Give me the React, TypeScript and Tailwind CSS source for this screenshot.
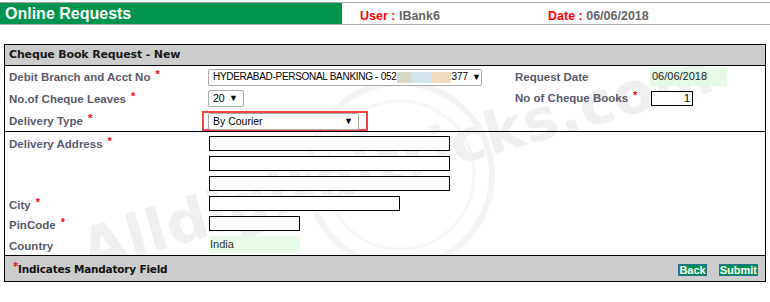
import React from "react";

const Star = () => (
  <span className="text-[#ff0000] text-[11px] relative -top-[3px] ml-[5px] font-bold">*</span>
);

const Label = ({ children, star = false }: { children: React.ReactNode; star?: boolean }) => (
  <div className="text-[11.5px] font-bold text-[#5a5a6c] whitespace-nowrap leading-none">
    {children}
    {star && <Star />}
  </div>
);

const SelectBox = ({ children, w }: { children: React.ReactNode; w: string }) => (
  <div
    className={`${w} h-[17px] border border-[#a9a9a9] rounded-[2px] bg-white flex items-center justify-between pl-[4px] pr-[5px] text-[10.5px] text-black leading-none whitespace-nowrap overflow-hidden`}
  >
    {children}
    <span className="text-[9px] ml-[4px] shrink-0">▼</span>
  </div>
);

const TextBox = ({ w, value = "", right = false }: { w: string; value?: string; right?: boolean }) => (
  <div
    className={`${w} h-[15px] border border-black bg-white text-[11px] leading-[13px] px-[2px] text-black ${
      right ? "text-right" : ""
    }`}
  >
    {value}
  </div>
);

const verdana = { fontFamily: "'DejaVu Sans', Verdana, sans-serif" };

export default function App() {
  return (
    <div
      className="relative w-[770px] h-[302px] bg-white overflow-hidden"
      style={{ fontFamily: "'Liberation Sans', Arial, sans-serif" }}
    >
      {/* Watermark */}
      <div className="absolute inset-0 pointer-events-none overflow-hidden">
        <svg className="absolute left-[300px] top-[75px]" width="200" height="200" viewBox="0 0 200 200">
          <circle cx="100" cy="100" r="92" fill="none" stroke="#f4f4f4" strokeWidth="6" />
          <circle cx="100" cy="100" r="74" fill="none" stroke="#f6f6f6" strokeWidth="3" />
        </svg>
        <div
          className="absolute left-[70px] top-[118px] text-[58px] font-bold text-[#f0f0f0] whitespace-nowrap -rotate-[16deg] origin-center tracking-[1px]"
          style={verdana}
        >
          Alldigitaltricks.com
        </div>
      </div>

      {/* Top header */}
      <div className="relative mt-[2px] h-[23px] border-y border-[#a8a8a8] flex bg-white">
        <div className="w-[342px] bg-[#00944f] text-white font-bold text-[16px] leading-[21px] pl-[5px]">
          Online Requests
        </div>
        <div className="flex items-center pt-[6px] text-[12.5px] font-bold">
          <div className="ml-[18px] w-[188px]">
            <span className="text-[#ff0000]">User : </span>
            <span className="text-[#666666]">IBank6</span>
          </div>
          <div>
            <span className="text-[#ff0000]">Date : </span>
            <span className="text-[#666666]">06/06/2018</span>
          </div>
        </div>
      </div>

      {/* Panel */}
      <div className="relative mx-[4px] mt-[19px] border border-black">
        <div
          className="h-[21px] bg-[#cccccc] border-b border-black flex items-center pl-[4px] text-[11px] tracking-[-0.15px] font-bold text-[#1a1a1a]"
          style={verdana}
        >
          Cheque Book Request - New
        </div>

        {/* Section 1 */}
        <div className="border-b border-black">
          <div className="h-[22px] flex items-center">
            <div className="w-[203px] pl-[4px] pt-[2px]">
              <Label star>Debit Branch and Acct No</Label>
            </div>
            <div className="w-[307px]">
              <SelectBox w="w-[274px]">
                <span className="flex items-center text-[10px] tracking-[-0.3px]">
                  HYDERABAD-PERSONAL BANKING - 052
                  <span className="inline-block w-[14px] h-[11px] bg-[#d8d8c8] ml-[1px]" />
                  <span className="inline-block w-[20px] h-[11px] bg-[#d2e6ec]" />
                  <span className="inline-block w-[20px] h-[11px] bg-[#eedcc0]" />
                  <span className="tracking-normal">377</span>
                </span>
              </SelectBox>
            </div>
            <div className="w-[135px] pt-[2px]">
              <Label>Request Date</Label>
            </div>
            <div className="w-[77px] h-[18px] bg-[#e6fae6] text-[11px] leading-[16px] pl-[2px] text-[#222]">
              06/06/2018
            </div>
          </div>
          <div className="h-[21px] flex items-center">
            <div className="w-[203px] pl-[4px] pt-[2px]">
              <Label star>No.of Cheque Leaves</Label>
            </div>
            <div className="w-[307px]">
              <SelectBox w="w-[36px]">20</SelectBox>
            </div>
            <div className="w-[136px]">
              <Label star>No of Cheque Books</Label>
            </div>
            <TextBox w="w-[42px]" value="1" right />
          </div>
          <div className="h-[22px] flex items-end">
            <div className="w-[197px] pl-[4px] self-center pt-[3px]">
              <Label star>Delivery Type</Label>
            </div>
            <div className="w-[166px] h-[20px] border-2 border-[#f04444] flex items-center pl-[4px]">
              <SelectBox w="w-[151px]">By Courier</SelectBox>
            </div>
          </div>
        </div>

        {/* Section 2 */}
        <div className="border-b border-black pt-[4px] pb-[2px] grid grid-cols-[204px_1fr] gap-y-[5px] items-center">
          <div className="pl-[4px] h-[15px] flex items-center pt-[2px]">
            <Label star>Delivery Address</Label>
          </div>
          <TextBox w="w-[241px]" />
          <div />
          <TextBox w="w-[241px]" />
          <div />
          <TextBox w="w-[241px]" />
          <div className="pl-[4px] h-[15px] flex items-center pt-[5px]">
            <Label star>City</Label>
          </div>
          <TextBox w="w-[191px]" />
          <div className="pl-[4px] h-[15px] flex items-center pt-[5px]">
            <Label star>PinCode</Label>
          </div>
          <TextBox w="w-[91px]" />
          <div className="pl-[4px] h-[17px] flex items-center pt-[4px]">
            <Label>Country</Label>
          </div>
          <div className="w-[91px] h-[17px] bg-[#e8fce8] text-[11px] leading-[16px] pl-[1px] text-[#333]">
            India
          </div>
        </div>

        {/* Footer */}
        <div className="h-[25px] bg-[#cccccc] flex items-center justify-between pl-[8px] pr-[7px]">
          <div className="text-[10.5px] tracking-[-0.2px] font-bold text-[#111] leading-none pt-[2px]" style={verdana}>
            <span className="text-[#ff0000] text-[10px] relative -top-[3px]">*</span>Indicates Mandatory Field
          </div>
          <div className="flex items-center gap-[12px] pt-[3px]">
            <div className="h-[12px] bg-[#00914e] border border-[#2a6f9a] text-white font-bold text-[11px] leading-[10px]">
              Back
            </div>
            <div className="h-[12px] bg-[#00914e] border border-[#2a6f9a] text-white font-bold text-[11px] leading-[10px]">
              Submit
            </div>
          </div>
        </div>
      </div>
    </div>
  );
}
